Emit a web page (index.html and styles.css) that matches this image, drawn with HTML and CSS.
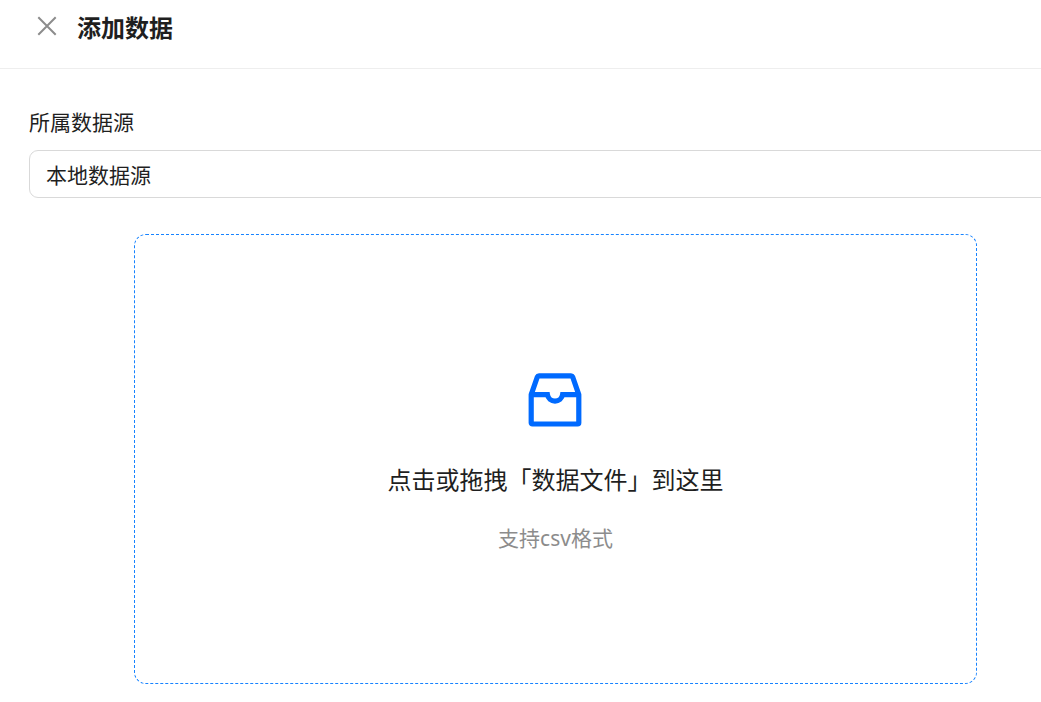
FILE: index.html
```html
<!DOCTYPE html>
<html lang="zh-CN">
<head>
<meta charset="utf-8">
<meta name="viewport" content="width=device-width, initial-scale=1">
<title>添加数据</title>
<link rel="stylesheet" href="styles.css">
</head>
<body>
<header class="header">
  <button class="close" type="button" aria-label="关闭">
    <svg width="20" height="20" viewBox="0 0 20 20" fill="none" stroke="currentColor" stroke-width="2" aria-hidden="true"><path d="M1.3 1.3 18.7 18.7M18.7 1.3 1.3 18.7"/></svg>
  </button>
  <h1 class="title">添加数据</h1>
</header>
<main class="content">
  <label class="label" for="source">所属数据源</label>
  <select class="select" id="source">
    <option>本地数据源</option>
  </select>
  <button class="upload" type="button">
    <svg class="upload-icon" width="56" height="56" viewBox="0 0 56 56" fill="none" stroke="currentColor" stroke-width="5.2" aria-hidden="true">
      <path stroke-linejoin="round" d="M4.2 22.7 10.3 5Q10.8 3.8 12 3.8H44Q45.2 3.8 45.7 5L51.8 22.7V50.8Q51.8 52 50.6 52H5.4Q4.2 52 4.2 50.8Z"/>
      <path d="M4.2 22.7H20.4A7.7 7.7 0 0 0 35.6 22.7H51.8"/>
    </svg>
    <span class="upload-text">点击或拖拽「数据文件」到这里</span>
    <span class="upload-hint">支持csv格式</span>
  </button>
</main>
</body>
</html>
```
FILE: styles.css
```css
* {
  box-sizing: border-box;
}

body {
  margin: 0;
  overflow-x: hidden;
  background: #fff;
  color: #1f1f1f;
  font-family: "Noto Sans", "Noto Sans CJK SC", sans-serif;
  font-size: 21px;
  line-height: 32px;
}

.header {
  display: flex;
  align-items: center;
  gap: 20px;
  padding: 10px 37px 22px;
  border-bottom: 1px solid #eee;
}

.close {
  display: flex;
  padding: 0 0 4px;
  border: 0;
  background: none;
  color: #8c8c8c;
  cursor: pointer;
}

.title {
  margin: 0;
  font-size: 24px;
  line-height: 36px;
  font-weight: 700;
}

/* The panel is wider than the window and runs on past its right edge. */
.content {
  display: flex;
  flex-direction: column;
  margin-right: -41px;
  padding: 37px 0 16px 29px;
}

.label {
  margin-bottom: 12px;
}

.select {
  appearance: none;
  height: 48px;
  padding: 2px 16px 0;
  border: 1px solid #d9d9d9;
  border-radius: 9px;
  background: #fff;
  color: inherit;
  font: inherit;
}

.upload {
  display: flex;
  flex-direction: column;
  align-items: center;
  justify-content: center;
  align-self: center;
  width: 80%;
  min-height: 450px;
  margin-top: 36px;
  padding: 32px 24px 24px;
  border: 1px dashed #1783ff;
  border-radius: 12px;
  background: #fff;
  color: inherit;
  font: inherit;
  cursor: pointer;
}

.upload-icon {
  color: #006aff;
}

.upload-text {
  margin-top: 32px;
  font-size: 24px;
  line-height: 40px;
}

.upload-hint {
  margin-top: 22px;
  color: #8c8c8c;
}
```
